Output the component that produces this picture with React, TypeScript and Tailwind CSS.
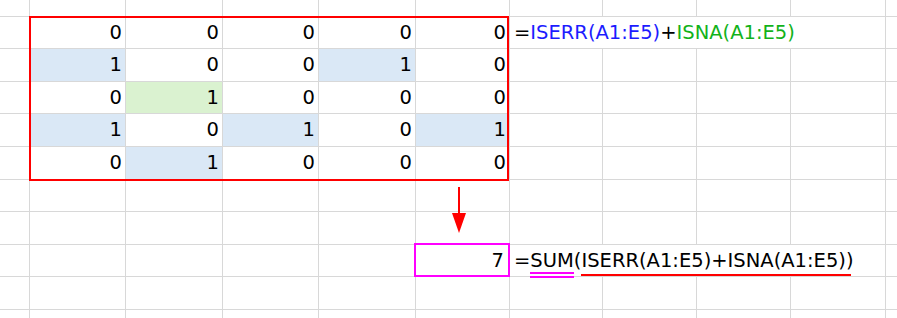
import React from 'react'

type Fill = 'none' | 'blue' | 'green'

interface Cell {
  value: number
  fill: Fill
}

const data: Cell[][] = [
  [
    { value: 0, fill: 'none' },
    { value: 0, fill: 'none' },
    { value: 0, fill: 'none' },
    { value: 0, fill: 'none' },
    { value: 0, fill: 'none' },
  ],
  [
    { value: 1, fill: 'blue' },
    { value: 0, fill: 'none' },
    { value: 0, fill: 'none' },
    { value: 1, fill: 'blue' },
    { value: 0, fill: 'none' },
  ],
  [
    { value: 0, fill: 'none' },
    { value: 1, fill: 'green' },
    { value: 0, fill: 'none' },
    { value: 0, fill: 'none' },
    { value: 0, fill: 'none' },
  ],
  [
    { value: 1, fill: 'blue' },
    { value: 0, fill: 'none' },
    { value: 1, fill: 'blue' },
    { value: 0, fill: 'none' },
    { value: 1, fill: 'blue' },
  ],
  [
    { value: 0, fill: 'none' },
    { value: 1, fill: 'blue' },
    { value: 0, fill: 'none' },
    { value: 0, fill: 'none' },
    { value: 0, fill: 'none' },
  ],
]

const ROWS = 11
const COLS = 11

function fillClass(fill: Fill) {
  if (fill === 'blue') return 'bg-[#dae8f6]'
  if (fill === 'green') return 'bg-[#daf2d0]'
  return ''
}

function borderClass(r: number, c: number) {
  const right = c === COLS - 1 ? 'border-r-0' : 'border-r'
  const bottom = r === ROWS - 1 ? 'border-b-0' : 'border-b'
  return `${right} ${bottom} border-[#d8d8d8]`
}

function FormulaTop() {
  return (
    <span className="whitespace-nowrap">
      <span className="text-black">=</span>
      <span className="text-[#1c1cff]">ISERR(A1:E5)</span>
      <span className="text-black">+</span>
      <span className="text-[#12b21a]">ISNA(A1:E5)</span>
    </span>
  )
}

function FormulaSum() {
  return (
    <span className="whitespace-nowrap text-black">
      =
      <span className="relative inline-block">
        SUM
        <span className="absolute left-0 right-0 top-[26px] h-[2px] bg-[#ff00ff]" />
        <span className="absolute left-0 right-0 top-[30px] h-[2px] bg-[#ff00ff]" />
      </span>
      (
      <span className="relative inline-block">
        ISERR(A1:E5)+ISNA(A1:E5))
        <span className="absolute left-0 right-[3px] top-[28px] h-[2px] bg-[#ff0000]" />
      </span>
    </span>
  )
}

export default function App() {
  const cells: React.ReactNode[] = []

  for (let r = 0; r < ROWS; r++) {
    for (let c = 0; c < COLS; c++) {
      // formula cells spill over F..I
      if ((r === 1 || r === 8) && c >= 7 && c <= 9) continue

      const key = `${r}-${c}`
      const base = `flex items-center ${borderClass(r, c)}`

      if ((r === 1 || r === 8) && c === 6) {
        cells.push(
          <div key={key} className={`${base} col-span-4 pl-[4px]`}>
            {r === 1 ? <FormulaTop /> : <FormulaSum />}
          </div>
        )
        continue
      }

      if (r >= 1 && r <= 5 && c >= 1 && c <= 5) {
        const cell = data[r - 1][c - 1]
        cells.push(
          <div key={key} className={`${base} justify-end pr-[3px] ${fillClass(cell.fill)}`}>
            {cell.value}
          </div>
        )
        continue
      }

      if (r === 8 && c === 5) {
        cells.push(
          <div key={key} className={`${base} justify-end pr-[5px]`}>
            7
          </div>
        )
        continue
      }

      cells.push(<div key={key} className={base} />)
    }
  }

  return (
    <div
      className="relative w-[897px] h-[318px] overflow-hidden bg-white text-[19.5px] text-black"
      style={{ fontFamily: '"DejaVu Sans", Verdana, sans-serif' }}
    >
      <div className="grid h-full grid-cols-[30px_96px_97px_96px_97px_94px_93px_94px_94px_95px_1fr] grid-rows-[17px_32px_33px_32px_33px_33px_32px_33px_32px_33px_9px]">
        {cells}
      </div>

      {/* red range outline A1:E5 */}
      <div className="pointer-events-none absolute left-[29px] top-[16px] w-[480px] h-[165px] border-2 border-[#ff0000]" />

      {/* arrow */}
      <svg className="absolute left-[450px] top-[186px]" width="18" height="48" viewBox="0 0 18 48">
        <line x1="9" y1="1" x2="9" y2="28" stroke="#ff0000" strokeWidth="2" />
        <polygon points="2,27 16,27 9,47" fill="#ff0000" />
      </svg>

      {/* magenta result cell E8 */}
      <div className="pointer-events-none absolute left-[414px] top-[243px] w-[96px] h-[34px] border-2 border-[#ff00ff]" />
    </div>
  )
}
